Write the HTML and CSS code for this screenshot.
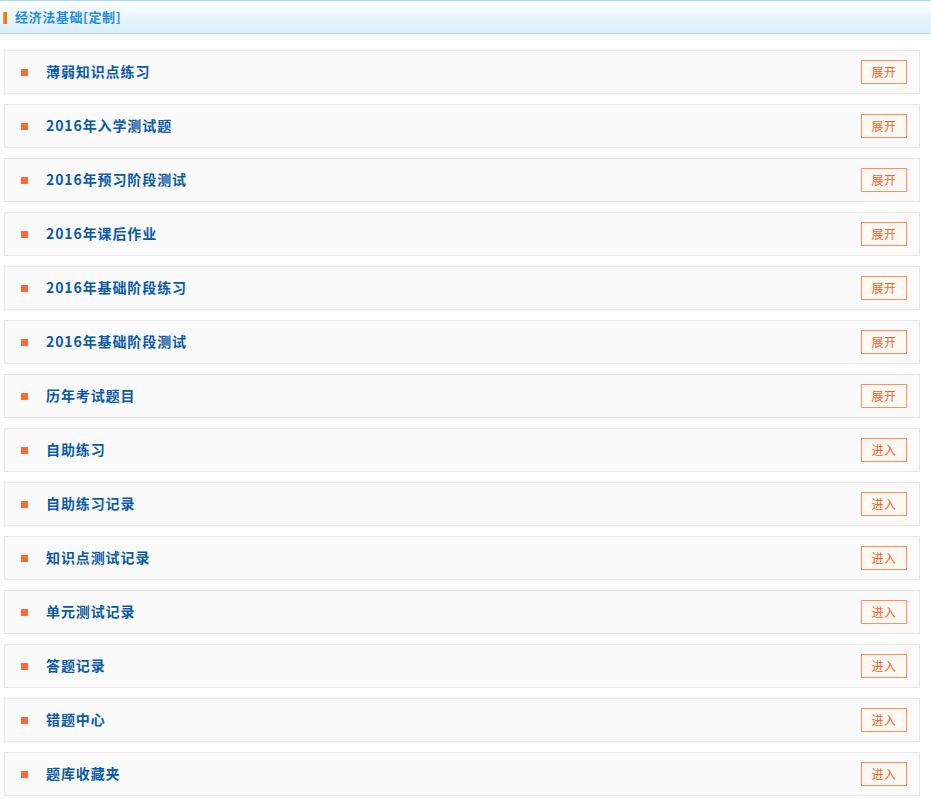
FILE: index.html
```html
<!DOCTYPE html>
<html lang="zh-CN">
<head>
<meta charset="utf-8">
<title>经济法基础[定制]</title>
<link rel="stylesheet" href="styles.css">
</head>
<body>
<div class="header"><span class="mark"></span><span class="title">经济法基础[定制]</span></div>
<ul class="list">
  <li class="row"><span class="dot"></span><span class="name">薄弱知识点练习</span><a class="btn">展开</a></li>
  <li class="row"><span class="dot"></span><span class="name">2016年入学测试题</span><a class="btn">展开</a></li>
  <li class="row"><span class="dot"></span><span class="name">2016年预习阶段测试</span><a class="btn">展开</a></li>
  <li class="row"><span class="dot"></span><span class="name">2016年课后作业</span><a class="btn">展开</a></li>
  <li class="row"><span class="dot"></span><span class="name">2016年基础阶段练习</span><a class="btn">展开</a></li>
  <li class="row"><span class="dot"></span><span class="name">2016年基础阶段测试</span><a class="btn">展开</a></li>
  <li class="row"><span class="dot"></span><span class="name">历年考试题目</span><a class="btn">展开</a></li>
  <li class="row"><span class="dot"></span><span class="name">自助练习</span><a class="btn">进入</a></li>
  <li class="row"><span class="dot"></span><span class="name">自助练习记录</span><a class="btn">进入</a></li>
  <li class="row"><span class="dot"></span><span class="name">知识点测试记录</span><a class="btn">进入</a></li>
  <li class="row"><span class="dot"></span><span class="name">单元测试记录</span><a class="btn">进入</a></li>
  <li class="row"><span class="dot"></span><span class="name">答题记录</span><a class="btn">进入</a></li>
  <li class="row"><span class="dot"></span><span class="name">错题中心</span><a class="btn">进入</a></li>
  <li class="row"><span class="dot"></span><span class="name">题库收藏夹</span><a class="btn">进入</a></li>
</ul>
</body>
</html>
```
FILE: styles.css
```css
html, body {
  margin: 0;
  padding: 0;
  background: #ffffff;
  font-family: "Noto Sans CJK SC", "Liberation Sans", sans-serif;
}
.header {
  height: 32px;
  border-top: 1px solid #a9daf3;
  border-bottom: 1px solid #a9daf3;
  background: linear-gradient(#fbfdff, #d9eefd);
  display: flex;
  align-items: center;
}
.mark {
  width: 4px;
  height: 12px;
  margin-left: 3px;
  margin-top: 1px;
  background: linear-gradient(90deg, #f39a32, #e06c06);
}
.title {
  margin-left: 8px;
  font-size: 13px;
  font-weight: bold;
  color: #1f8fdf;
  line-height: 16px;
  letter-spacing: 0.6px;
}
.list {
  list-style: none;
  margin: 16px 11px 0 4px;
  padding: 0;
}
.row {
  height: 42px;
  border: 1px solid #e7e7e7;
  background: #fafafa;
  margin-bottom: 10px;
  display: flex;
  align-items: center;
}
.dot {
  width: 7px;
  height: 7px;
  background: #ff6a33;
  margin-left: 16px;
}
.name {
  margin-left: 18px;
  margin-bottom: 2px;
  font-size: 14px;
  font-weight: bold;
  color: #0a5aa6;
  letter-spacing: 0.9px;
  flex: 1;
}
.btn {
  width: 44px;
  height: 22px;
  border: 1px solid #ff8f63;
  background: #fbf9f2;
  color: #ff5f26;
  font-size: 12px;
  line-height: 22px;
  text-align: center;
  letter-spacing: 0.5px;
  margin-right: 12px;
  cursor: pointer;
}
```
